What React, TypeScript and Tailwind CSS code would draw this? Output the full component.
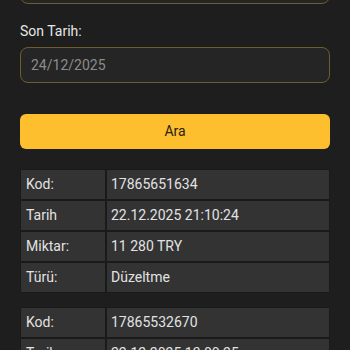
const rows1 = [
  { label: "Kod:", value: "17865651634" },
  { label: "Tarih", value: "22.12.2025 21:10:24" },
  { label: "Miktar:", value: "11 280 TRY" },
  { label: "Türü:", value: "Düzeltme" },
];

const rows2 = [
  { label: "Kod:", value: "17865532670" },
  { label: "Tarih", value: "22.12.2025 13:00:25" },
  { label: "Miktar:", value: "5 000 TRY" },
  { label: "Türü:", value: "Düzeltme" },
];

function InfoTable({ rows }: { rows: { label: string; value: string }[] }) {
  return (
    <div className="grid grid-cols-[84px_1fr] gap-[2px] bg-[#1a1a1a] p-px">
      {rows.map((r) => (
        <div key={r.label} className="contents">
          <div className="flex h-[29px] items-center bg-[#333333] px-[5px] text-[14px] text-[#e2e2e2]">
            {r.label}
          </div>
          <div className="flex h-[29px] items-center bg-[#333333] px-[4px] text-[14px] text-[#e2e2e2]">
            {r.value}
          </div>
        </div>
      ))}
    </div>
  );
}

export default function App() {
  return (
    <div
      className="h-[350px] w-[350px] overflow-hidden bg-[#1e1e1e] px-5"
      style={{ fontFamily: "Roboto, 'Noto Sans', sans-serif" }}
    >
      <div className="-mt-[32px] flex flex-col">
        <div className="h-9 rounded-lg border border-[#6f5d2e] bg-[#252525]" />
        <label className="mt-[17px] text-[14px] leading-[20px] text-[#e6e6e6]">Son Tarih:</label>
        <div className="mt-[6px] flex h-9 items-center rounded-lg border border-[#6f5d2e] bg-[#252525] px-[10px] text-[14px] text-[#8c8c8c]">
          24/12/2025
        </div>
        <button className="mt-[31px] h-[35px] rounded-md bg-[#fdbf2d] text-[14px] text-[#2a2212]">
          Ara
        </button>
        <div className="mt-[20px]">
          <InfoTable rows={rows1} />
        </div>
        <div className="mt-[14px]">
          <InfoTable rows={rows2} />
        </div>
      </div>
    </div>
  );
}
